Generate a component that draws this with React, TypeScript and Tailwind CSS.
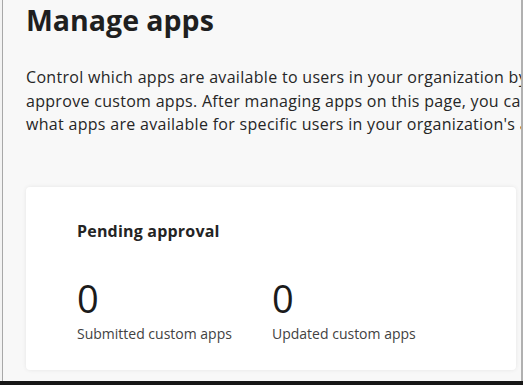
import React from "react";

const font = { fontFamily: '"Open Sans", "Noto Sans", sans-serif' };

const Stat: React.FC<{ value: number; label: string; width: string }> = ({ value, label, width }) => (
  <div className={`flex flex-col ${width}`}>
    <span className="text-[38px] leading-[40px] text-[#1b1b1b]">{value}</span>
    <span className="mt-[6px] text-[14px] leading-[20px] text-[#424242]">{label}</span>
  </div>
);

const App: React.FC = () => {
  return (
    <div className="flex h-[385px] w-[523px] flex-col overflow-hidden bg-[#1a1a1a]" style={font}>
      <div className="flex flex-1 bg-[#f8f8f8]">
        <div className="w-[2px] bg-[#f3f3f3]" />
        <div className="w-[1px] bg-[#a8a8a8]" />
        <div className="flex min-w-0 flex-1 flex-col overflow-hidden pl-[23px] pr-[5px]">
          <h1 className="mt-[2px] whitespace-nowrap text-[28.5px] font-bold leading-[36px] text-[#1f1f1f]">
            Manage apps
          </h1>
          <div className="mt-[28px] whitespace-nowrap text-[16px] leading-[23.5px] tracking-[0.3px] text-[#262626]">
            <p>Control which apps are available to users in your organization by allowing</p>
            <p>approve custom apps. After managing apps on this page, you can use</p>
            <p>what apps are available for specific users in your organization's app store.</p>
          </div>
          <div className="mt-[50px] h-[183px] shrink-0 rounded-[4px] bg-white px-[51px] pt-[33px] shadow-[0_0_4px_rgba(0,0,0,0.08)]">
            <h2 className="text-[16px] font-bold leading-[22px] tracking-[0.2px] text-[#242424]">Pending approval</h2>
            <div className="mt-[36px] flex">
              <Stat value={0} label="Submitted custom apps" width="w-[195px]" />
              <Stat value={0} label="Updated custom apps" width="w-[160px]" />
            </div>
          </div>
        </div>
        <div className="w-[2px] bg-[#b0b0b0]" />
      </div>
      <div className="h-[4px] shrink-0 bg-[#161616]" />
    </div>
  );
};

export default App;
